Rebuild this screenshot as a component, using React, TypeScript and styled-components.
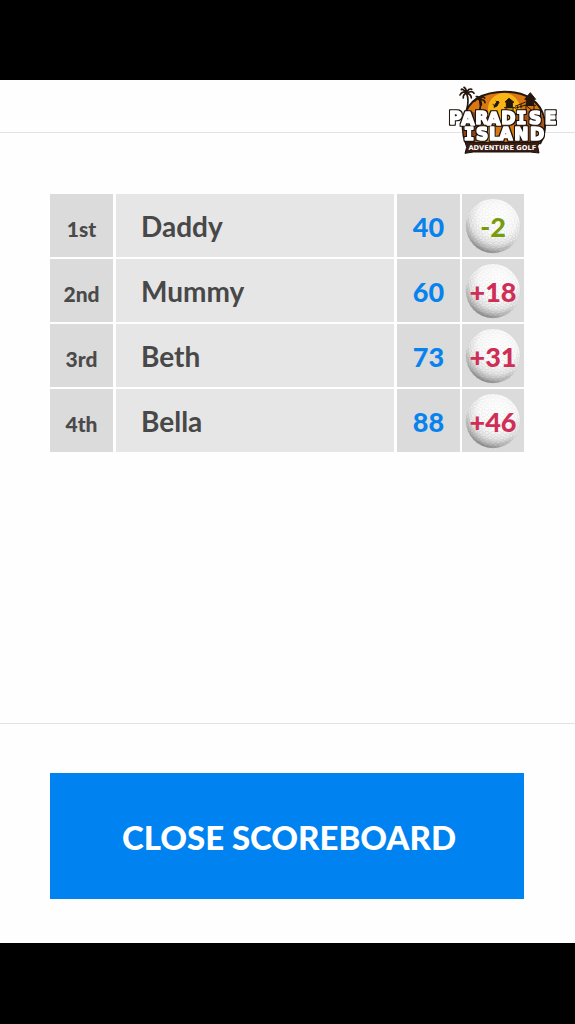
import React from "react";
import styled, { createGlobalStyle } from "styled-components";

const GlobalStyle = createGlobalStyle`
  * { box-sizing: border-box; }
  body { margin: 0; background: #000; }
`;

const Screen = styled.div`
  display: flex;
  flex-direction: column;
  min-height: 100vh;
  padding: 80px 0 81px;
  background: #000;
  font-family: Lato, "Gill Sans", sans-serif;
  font-weight: 900;
`;

const Page = styled.div`
  flex: 1;
  display: flex;
  flex-direction: column;
  background: #fefefe;
`;

const Header = styled.header`
  position: relative;
  height: 53px;
  border-bottom: 1px solid #e3e3e3;
`;

const LogoSvg = styled.svg`
  position: absolute;
  top: 4px;
  right: 15px;
  width: 112px;
  height: 72px;
  overflow: visible;
`;

const Main = styled.main`
  flex: 1;
  padding: 61px 51px 40px 50px;
`;

const Board = styled.table`
  width: 100%;
  table-layout: fixed;
  border-spacing: 0;
  line-height: 32px;
`;

const Column = styled.col<{ $width?: number }>`
  width: ${(p) => (p.$width ? `${p.$width}px` : "auto")};
`;

const Row = styled.tr`
  height: 65px;
`;

const Cell = styled.td`
  padding: 2px 0 0;
  background: #dbdbdb;
  border-bottom: 2px solid #fefefe;
  border-left: 2px solid #fefefe;
  text-align: center;
  vertical-align: middle;
  font-size: 27px;
`;

const RankCell = styled(Cell)`
  border-left: 0;
  padding-top: 6px;
  color: #4a4a4a;
  font-size: 21px;
`;

const NameCell = styled(Cell).attrs({ as: "th", scope: "row" })`
  padding: 0 0 0 25px;
  border-left-width: 3px;
  background: #e6e6e6;
  color: #484848;
  text-align: left;
  font-size: 28px;
`;

const ScoreCell = styled(Cell)`
  border-left-width: 3px;
  color: #0883ee;
`;

const BallCell = styled(Cell)`
  padding-top: 0;
`;

const BallWrap = styled.div<{ $under: boolean }>`
  display: grid;
  place-items: center;
  color: ${(p) => (p.$under ? "#789b0d" : "#cf2e56")};

  > * {
    grid-area: 1 / 1;
  }
`;

const BallSvg = styled.svg`
  display: block;
  width: 56px;
  height: 56px;
`;

const Par = styled.span`
  position: relative;
  padding-top: 2px;
`;

const Footer = styled.footer`
  padding: 49px 51px 44px 50px;
  border-top: 1px solid #e3e3e3;
`;

const CloseButton = styled.button`
  display: block;
  width: 100%;
  height: 126px;
  padding: 2px 0 0 4px;
  border: 0;
  background: #0082f0;
  color: #fff;
  font: inherit;
  font-size: 33px;
  line-height: 40px;
  cursor: pointer;
`;

const dimples: { x: number; y: number; rx: number; ry: number }[] = [];
for (let row = -6; row <= 6; row++) {
  for (let col = -6; col <= 6; col++) {
    const u = (col + (row % 2 ? 0.5 : 0)) / 6.2;
    const v = row / 6.4;
    const d = Math.hypot(u, v);
    if (d < 0.98) {
      const bulge = d ? Math.sin((d * Math.PI) / 2) / d : 1.57;
      dimples.push({
        x: 28 + u * bulge * 26,
        y: 28 + v * bulge * 26,
        rx: 2.5 - Math.abs(u) * 1.3,
        ry: 2.3 - Math.abs(v) * 1.2,
      });
    }
  }
}

function GolfBall() {
  return (
    <BallSvg viewBox="0 0 56 56" aria-hidden="true">
      <defs>
        <radialGradient id="ball" cx="0.6" cy="0.3" r="0.75">
          <stop offset="0" stopColor="#fff" />
          <stop offset="0.5" stopColor="#fafafa" />
          <stop offset="0.72" stopColor="#e6e6e6" />
          <stop offset="0.88" stopColor="#b5b5b5" />
          <stop offset="1" stopColor="#6d6d6d" />
        </radialGradient>
        <linearGradient id="dimple" gradientUnits="userSpaceOnUse" x1="36" y1="3" x2="19" y2="53">
          <stop offset="0" stopColor="#999" stopOpacity="0.08" />
          <stop offset="1" stopColor="#777" stopOpacity="0.32" />
        </linearGradient>
      </defs>
      <circle cx="28" cy="28" r="27" fill="url(#ball)" />
      {dimples.map((d, i) => (
        <ellipse key={i} cx={d.x} cy={d.y} rx={d.rx} ry={d.ry} fill="none" stroke="url(#dimple)" strokeWidth="0.6" />
      ))}
    </BallSvg>
  );
}

function Logo() {
  return (
    <LogoSvg viewBox="24 24 336 216" role="img" aria-label="Paradise Island Adventure Golf">
      <defs>
        <clipPath id="island">
          <path d="M78 200C60 155 70 96 112 68C158 43 231 42 271 69C313 97 324 153 298 200Z" />
        </clipPath>
        <filter id="outline" x="-10%" y="-20%" width="120%" height="140%" colorInterpolationFilters="sRGB">
          <feMorphology in="SourceAlpha" operator="dilate" radius="4" result="spread" />
          <feFlood floodColor="#17100b" />
          <feComposite in2="spread" operator="in" result="edge" />
          <feMerge>
            <feMergeNode in="edge" />
            <feMergeNode in="SourceGraphic" />
          </feMerge>
        </filter>
      </defs>
      <path d="M78 202C58 154 68 95 111 67C158 41 231 40 273 68C316 97 327 154 301 202Z" fill="#d97812" stroke="#24160d" strokeWidth="6" />
      <g clipPath="url(#island)">
        <circle cx="192" cy="99" r="48" fill="#f9b514" />
        <path d="M60 111Q98 97 119 120L126 202H60Z" fill="#8b4218" />
        <path d="M106 198Q122 152 164 163L180 202Z" fill="#efa22b" />
        <path d="M215 118Q275 91 322 125V202H235Z" fill="#a95317" />
        <path d="M270 202Q288 156 320 160V202Z" fill="#e78b1c" />
      </g>
      <g fill="none" stroke="#24160d" strokeWidth="5" strokeLinecap="round">
        <path d="M80 53Q88 72 80 101" />
        <path d="M80 51Q66 44 60 57M79 50Q66 35 64 41M80 49Q78 37 72 34M81 50Q85 36 95 40M82 52Q95 42 102 52M81 52Q94 55 94 66M79 52Q68 57 70 66" />
        <path d="M119 73Q124 90 118 107" />
        <path d="M119 72Q109 65 105 75M119 72Q117 60 109 62M120 71Q128 58 134 66M121 72Q134 69 135 80M120 73Q126 79 124 87" />
      </g>
      <g fill="#24160d" stroke="#24160d" strokeWidth="3">
        <path d="M162 94L166 83L174 75L177 79L171 90Z" />
        <path d="M167 75L174 80M158 85L167 91" />
        <path d="M195 78L207 67L222 79ZM199 80H217V95H199ZM192 95H226M198 96V111M219 96V111M225 91L257 78M225 97L257 87M233 88V98M243 84V96" />
        <path d="M254 70L271 50L287 70ZM259 71H281V88H259ZM254 88H288M258 89V109M282 89V109M260 90L281 108" />
      </g>
      <text
        filter="url(#outline)"
        fill="#fff"
        stroke="#fff"
        strokeWidth="5"
        strokeLinejoin="round"
        fontFamily='"DejaVu Sans"'
        fontWeight="700"
        fontSize="51"
      >
        <tspan x="28 64 106 142 184" y="145 147 145 148 145">PARAD</tspan>
        <tspan x="229" y="145" fontFamily='"DejaVu Sans Mono"'>I</tspan>
        <tspan x="267 314" y="144 145">SE</tspan>
        <tspan x="72" y="193" fontFamily='"DejaVu Sans Mono"'>I</tspan>
        <tspan x="108 147 178 223 270" y="191 193 191 192 193">SLAND</tspan>
      </text>
      <path d="M75 197L99 199H275L298 196L293 211L297 231L271 228H100L75 232L80 214Z" fill="#3c1d12" stroke="#17100b" strokeWidth="3" />
      <text
        x="187"
        y="221"
        textAnchor="middle"
        fill="#fff"
        fontFamily='"DejaVu Sans"'
        fontWeight="700"
        fontSize="20"
      >
        ADVENTURE GOLF
      </text>
    </LogoSvg>
  );
}

const players = [
  { rank: "1st", name: "Daddy", score: 40, par: -2 },
  { rank: "2nd", name: "Mummy", score: 60, par: 18 },
  { rank: "3rd", name: "Beth", score: 73, par: 31 },
  { rank: "4th", name: "Bella", score: 88, par: 46 },
];

export default function App() {
  return (
    <Screen>
      <GlobalStyle />
      <Page>
        <Header>
          <Logo />
        </Header>
        <Main>
          <Board aria-label="Scoreboard">
            <colgroup>
              <Column $width={63} />
              <Column />
              <Column $width={66} />
              <Column $width={64} />
            </colgroup>
            <tbody>
              {players.map((p) => (
                <Row key={p.rank}>
                  <RankCell>{p.rank}</RankCell>
                  <NameCell>{p.name}</NameCell>
                  <ScoreCell>{p.score}</ScoreCell>
                  <BallCell>
                    <BallWrap $under={p.par < 0}>
                      <GolfBall />
                      <Par>{p.par > 0 ? `+${p.par}` : p.par}</Par>
                    </BallWrap>
                  </BallCell>
                </Row>
              ))}
            </tbody>
          </Board>
        </Main>
        <Footer>
          <CloseButton type="button">CLOSE SCOREBOARD</CloseButton>
        </Footer>
      </Page>
    </Screen>
  );
}
